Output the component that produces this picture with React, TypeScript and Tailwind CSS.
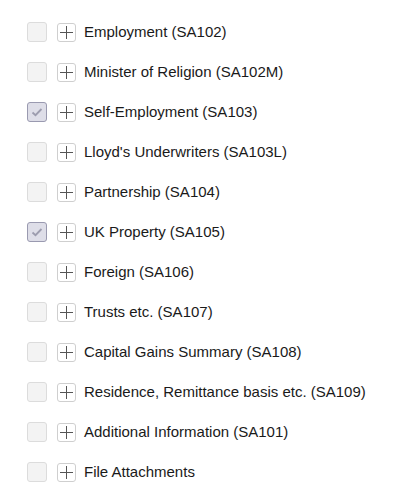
const items = [
  { label: "Employment (SA102)", checked: false },
  { label: "Minister of Religion (SA102M)", checked: false },
  { label: "Self-Employment (SA103)", checked: true },
  { label: "Lloyd's Underwriters (SA103L)", checked: false },
  { label: "Partnership (SA104)", checked: false },
  { label: "UK Property (SA105)", checked: true },
  { label: "Foreign (SA106)", checked: false },
  { label: "Trusts etc. (SA107)", checked: false },
  { label: "Capital Gains Summary (SA108)", checked: false },
  { label: "Residence, Remittance basis etc. (SA109)", checked: false },
  { label: "Additional Information (SA101)", checked: false },
  { label: "File Attachments", checked: false },
];

function Checkbox({ checked }: { checked: boolean }) {
  if (checked) {
    return (
      <span className="flex h-5 w-5 items-center justify-center rounded-[3px] border border-[#9a9ab0] bg-[#dedee8]">
        <svg width="14" height="14" viewBox="0 0 14 14" fill="none">
          <path d="M2.5 7.5 L5.5 10.2 L11.5 4" stroke="#9c9cae" strokeWidth="1.8" />
        </svg>
      </span>
    );
  }
  return <span className="h-5 w-5 rounded-[3px] border border-[#dcdcdc] bg-[#f3f3f3]" />;
}

function PlusBox() {
  return (
    <span className="flex h-[19px] w-[19px] items-center justify-center rounded-[3px] border border-[#cfcfcf] bg-white">
      <svg width="13" height="13" viewBox="0 0 13 13">
        <path d="M6.5 0 V13 M0 6.5 H13" stroke="#555" strokeWidth="1" />
      </svg>
    </span>
  );
}

export default function App() {
  return (
    <div className="bg-white pt-[12px] pl-[27px] font-['Liberation_Sans',Arial,sans-serif]">
      <ul>
        {items.map((item) => (
          <li key={item.label} className="flex h-10 items-center">
            <Checkbox checked={item.checked} />
            <span className="ml-[10px]">
              <PlusBox />
            </span>
            <span className="ml-[8px] text-[15px] text-[#1a1a1a]">{item.label}</span>
          </li>
        ))}
      </ul>
    </div>
  );
}
